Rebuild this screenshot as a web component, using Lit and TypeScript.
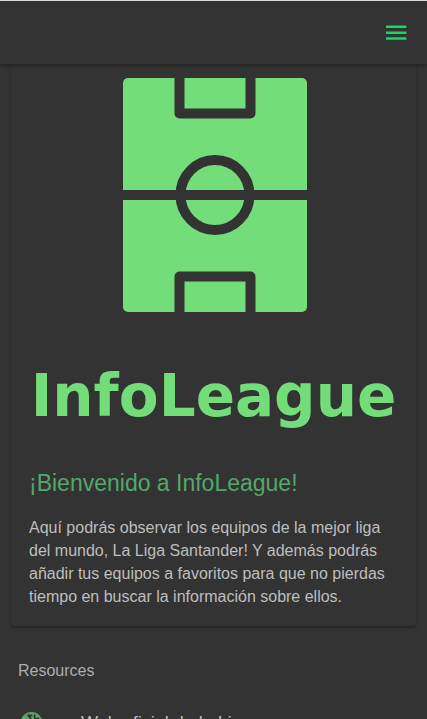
import { LitElement, html, css } from "lit";
import { customElement } from "lit/decorators.js";

@customElement("app-toolbar")
class AppToolbar extends LitElement {
  static styles = css`
    :host {
      display: block;
      position: relative;
      z-index: 1;
    }
    .bar {
      display: flex;
      align-items: center;
      justify-content: flex-end;
      box-sizing: border-box;
      height: 64px;
      padding: 0 15px;
      border-top: 1px solid #dcdcdc;
      background: #333;
      box-shadow: 0 2px 4px rgba(0, 0, 0, 0.3);
    }
    .menu {
      display: flex;
      padding: 4px;
      border: 0;
      background: none;
      color: #10dc60;
      cursor: pointer;
    }
    .icon {
      width: 24px;
      height: 24px;
      fill: currentColor;
    }
  `;

  render() {
    return html`
      <header class="bar">
        <button class="menu" aria-label="Menu">
          <svg class="icon" viewBox="0 0 24 24" aria-hidden="true">
            <path
              d="M2 4.400h20.400v2.600H2zM2 10.400h20.400v2.600H2zM2 16.200h20.400v2.600H2z"
            />
          </svg>
        </button>
      </header>
    `;
  }
}

@customElement("league-logo")
class LeagueLogo extends LitElement {
  static styles = css`
    :host {
      display: flex;
      flex-direction: column;
      align-items: center;
      color: #73dd7a;
    }
    .pitch {
      width: 186px;
      height: 234px;
    }
    .grass {
      fill: currentColor;
    }
    .lines {
      fill: none;
      stroke: #333;
      stroke-width: 10;
      stroke-linejoin: round;
    }
    .name {
      margin-top: 50px;
      font: bold 58px/68px "DejaVu Sans", sans-serif;
      white-space: nowrap;
    }
  `;

  render() {
    return html`
      <svg class="pitch" viewBox="0 0 186 234" aria-hidden="true">
        <rect class="grass" x="2" width="184" height="234" rx="5" />
        <path
          class="lines"
          d="M58.500 -6V35.500H129.500V-6M58.500 240V198.500H129.500V240M0 117H186"
        />
        <ellipse class="lines" cx="94" cy="117" rx="34.500" ry="35" />
      </svg>
      <div class="name">InfoLeague</div>
    `;
  }
}

@customElement("app-root")
class AppRoot extends LitElement {
  static styles = css`
    :host {
      display: block;
      height: 100vh;
      overflow: hidden;
      background: #333;
      color: #bebebe;
      font: 16px/23px "Liberation Sans", Arial, sans-serif;
    }
    .card {
      margin: 0 11px;
      padding: 14px 18px 18px;
      border-radius: 4px;
      box-shadow: 0 2px 3px rgba(0, 0, 0, 0.3);
    }
    .title {
      margin: 39px 0 19px;
      color: #53a76a;
      font-size: 23px;
      font-weight: normal;
      line-height: 28px;
    }
    .text {
      margin: 0;
    }
    .label {
      margin: 33px 18px 29px;
      color: #adadad;
      font-size: 16px;
      font-weight: normal;
    }
    .item {
      display: flex;
      align-items: center;
      gap: 37px;
      padding: 0 20px;
      color: inherit;
      font-size: 18px;
      line-height: 24px;
      text-decoration: none;
    }
    .globe {
      width: 24px;
      height: 24px;
      flex: none;
    }
    .sea {
      fill: #53a76a;
    }
    .land {
      fill: #333;
    }
  `;

  render() {
    return html`
      <app-toolbar></app-toolbar>
      <main>
        <section class="card">
          <league-logo></league-logo>
          <h1 class="title">¡Bienvenido a InfoLeague!</h1>
          <p class="text">
            Aquí podrás observar los equipos de la mejor liga del mundo, La Liga
            Santander! Y además podrás añadir tus equipos a favoritos para que
            no pierdas tiempo en buscar la información sobre ellos.
          </p>
        </section>
        <h2 class="label">Resources</h2>
        <a class="item" href="#">
          <svg class="globe" viewBox="0 0 24 24" aria-hidden="true">
            <circle class="sea" cx="11.500" cy="12" r="11" />
            <path
              class="land"
              d="M8.500 3l2 1 1.500-1 .5 1.500-1.500 1 .5 2-2 .5-1-2-1.500-1zM14 3l2 1.500-1 1.500 2 1 1.500-1 1.500 3 .5 4-2.500-1-1 2 2 2-2 3-3 1-1-5-2-2 2-3 2-1-1.500-3zM4 8l2 1 1 2-2 3-2-2z"
            />
          </svg>
          <span>Web oficial de la Liga</span>
        </a>
      </main>
    `;
  }
}
